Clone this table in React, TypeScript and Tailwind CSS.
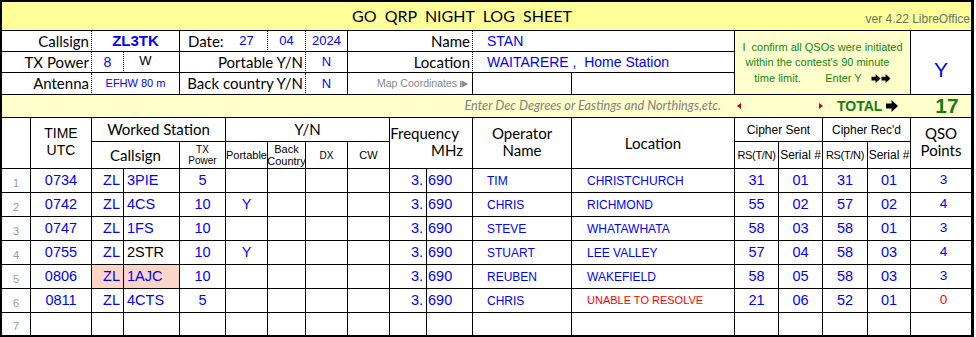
import React from "react";

const A = "font-['Liberation_Sans',Arial,sans-serif]";
const N = "font-['Liberation_Sans_Narrow','Liberation_Sans',Arial,sans-serif]";
const L = "font-['Lato',sans-serif]";
const COLS =
  "grid grid-cols-[29px_61px_32px_56px_46px_42px_38px_42px_42px_37px_46px_99px_163px_44px_44px_45px_43px_60px]";

function Arrow({ w = 12, h = 12 }: { w?: number; h?: number }) {
  return (
    <svg width={w} height={h} viewBox="0 0 12 12" className="shrink-0">
      <polygon points="0,3.5 5.5,3.5 5.5,0 12,6 5.5,12 5.5,8.5 0,8.5" fill="#000" />
    </svg>
  );
}

type Row = {
  n: number;
  time: string;
  zl: string;
  call: string;
  pwr: string;
  port: string;
  freqA: string;
  freqB: string;
  op: string;
  loc: string;
  rs1: string;
  s1: string;
  rs2: string;
  s2: string;
  pts: string;
  callBlack?: boolean;
  pink?: boolean;
  locRed?: boolean;
  ptsRed?: boolean;
};

const rows: Row[] = [
  { n: 1, time: "0734", zl: "ZL", call: "3PIE", pwr: "5", port: "", freqA: "3.", freqB: "690", op: "TIM", loc: "CHRISTCHURCH", rs1: "31", s1: "01", rs2: "31", s2: "01", pts: "3" },
  { n: 2, time: "0742", zl: "ZL", call: "4CS", pwr: "10", port: "Y", freqA: "3.", freqB: "690", op: "CHRIS", loc: "RICHMOND", rs1: "55", s1: "02", rs2: "57", s2: "02", pts: "4" },
  { n: 3, time: "0747", zl: "ZL", call: "1FS", pwr: "10", port: "", freqA: "3.", freqB: "690", op: "STEVE", loc: "WHATAWHATA", rs1: "58", s1: "03", rs2: "58", s2: "01", pts: "3" },
  { n: 4, time: "0755", zl: "ZL", call: "2STR", pwr: "10", port: "Y", freqA: "3.", freqB: "690", op: "STUART", loc: "LEE VALLEY", rs1: "57", s1: "04", rs2: "58", s2: "03", pts: "4", callBlack: true },
  { n: 5, time: "0806", zl: "ZL", call: "1AJC", pwr: "10", port: "", freqA: "3.", freqB: "690", op: "REUBEN", loc: "WAKEFIELD", rs1: "58", s1: "05", rs2: "58", s2: "03", pts: "3", pink: true },
  { n: 6, time: "0811", zl: "ZL", call: "4CTS", pwr: "5", port: "", freqA: "3.", freqB: "690", op: "CHRIS", loc: "UNABLE TO RESOLVE", rs1: "21", s1: "06", rs2: "52", s2: "01", pts: "0", locRed: true, ptsRed: true },
  { n: 7, time: "", zl: "", call: "", pwr: "", port: "", freqA: "", freqB: "", op: "", loc: "", rs1: "", s1: "", rs2: "", s2: "", pts: "" },
];

const C = "border-r border-b border-black flex items-center";
const CD = "border-r border-b border-black [border-right-style:dotted] flex items-center";
const CL = "border-b border-black flex items-center";

export default function App() {
  return (
    <div className="w-[976px] h-[337px] bg-white text-black">
      <div className="w-[974px] border-l-2 border-t-2 border-r-[3px] border-b border-black">
        {/* Top section */}
        <div className={`${COLS} grid-rows-[29px_21px_21px_22px_23px]`}>
          {/* title */}
          <div className={`col-start-1 col-span-18 row-start-1 bg-[#ffff99] ${CL}`}>
            <span className={`${L} pl-[350px] text-[16px] whitespace-pre leading-none`}>GO  QRP  NIGHT  LOG  SHEET</span>
            <span className={`${N} ml-auto pr-[1px] pt-[5px] text-[12px] text-[#667766] leading-none`}>ver 4.22 LibreOffice</span>
          </div>

          {/* row: callsign */}
          <div className={`col-start-1 col-span-2 row-start-2 ${CD} justify-end pr-[2px] ${L} text-[15px]`}>Callsign</div>
          <div className={`col-start-3 col-span-2 row-start-2 ${C} justify-center ${A} font-bold text-[15px] text-[#0000ff]`}>ZL3TK</div>
          <div className={`col-start-5 row-start-2 ${CL} pl-[8px] ${L} text-[15px]`}>Date:</div>
          <div className={`col-start-6 row-start-2 ${CD} justify-center ${A} text-[13px] text-[#0000ff]`}>27</div>
          <div className={`col-start-7 row-start-2 ${CD} justify-center ${A} text-[13px] text-[#0000ff]`}>04</div>
          <div className={`col-start-8 row-start-2 ${C} justify-center ${A} text-[13px] text-[#0000ff]`}>2024</div>
          <div className={`col-start-9 col-span-3 row-start-2 ${CD} justify-end pr-[2px] ${L} text-[15px]`}>Name</div>
          <div className={`col-start-12 col-span-2 row-start-2 ${C} pl-[14px] ${A} text-[14px] text-[#0000ff]`}>STAN</div>
          <div className={`col-start-14 col-span-4 row-start-2 row-span-3 bg-[#ffffcc] border-r border-b border-black flex flex-col items-center justify-center ${N} text-[11px] leading-[15.5px] text-[#118811] pt-[1px]`}>
            <span className="whitespace-pre">I  confirm all QSOs were initiated</span>
            <span className="whitespace-pre pr-[10px]">within the contest's 90 minute</span>
            <span className="whitespace-pre flex items-center">
              time limit.        Enter Y   <Arrow w={10} h={9} />
              <Arrow w={10} h={9} />
            </span>
          </div>
          <div className={`col-start-18 row-start-2 row-span-3 ${CL} justify-center pt-[15px] ${A} text-[21px] text-[#0000ff]`}>Y</div>

          {/* row: tx power */}
          <div className={`col-start-1 col-span-2 row-start-3 ${CD} justify-end pr-[2px] ${L} text-[15px]`}>TX Power</div>
          <div className={`col-start-3 row-start-3 ${CD} justify-center ${A} text-[14px] text-[#0000ff]`}>8</div>
          <div className={`col-start-4 row-start-3 ${C} justify-center pr-[12px] pb-[3px] ${A} text-[13px]`}>W</div>
          <div className={`col-start-5 col-span-3 row-start-3 ${CD} justify-end pr-[2px] ${L} text-[15px]`}>Portable Y/N</div>
          <div className={`col-start-8 row-start-3 ${C} justify-center ${A} text-[13px] text-[#0000ff]`}>N</div>
          <div className={`col-start-9 col-span-3 row-start-3 ${CD} justify-end pr-[2px] ${L} text-[15px]`}>Location</div>
          <div className={`col-start-12 col-span-2 row-start-3 ${C} pl-[14px] ${A} text-[14px] text-[#0000ff] whitespace-pre`}>WAITARERE ,  Home Station</div>

          {/* row: antenna */}
          <div className={`col-start-1 col-span-2 row-start-4 ${CD} justify-end pr-[2px] ${L} text-[15px]`}>Antenna</div>
          <div className={`col-start-3 col-span-2 row-start-4 ${C} justify-center ${A} text-[11px] text-[#0000ff] whitespace-pre`}>EFHW 80 m</div>
          <div className={`col-start-5 col-span-3 row-start-4 ${CD} justify-end pr-[2px] ${L} text-[15px]`}>Back country Y/N</div>
          <div className={`col-start-8 row-start-4 ${C} justify-center ${A} text-[13px] text-[#0000ff]`}>N</div>
          <div className={`col-start-9 col-span-3 row-start-4 ${C} justify-end pr-[4px] ${N} text-[10.5px] text-[#888888]`}>
            Map Coordinates
            <svg width="8" height="8" viewBox="0 0 8 8" className="ml-[3px]">
              <rect x="0" y="1" width="1.5" height="6" fill="#888888" />
              <polygon points="2,0.5 8,4 2,7.5" fill="#888888" />
            </svg>
          </div>
          <div className={`col-start-12 row-start-4 ${C}`}></div>
          <div className={`col-start-13 row-start-4 ${C}`}></div>

          {/* yellow row */}
          <div className={`col-start-1 col-span-13 row-start-5 bg-[#ffffcc] ${CL} justify-end pr-[14px] ${L} italic text-[12.7px] text-[#808080]`}>
            Enter Dec Degrees or Eastings and Northings,etc.
          </div>
          <div className={`col-start-14 col-span-4 row-start-5 bg-[#ffffcc] ${CL}`}>
            <svg width="4" height="6" viewBox="0 0 4 6" className="ml-[2px]">
              <polygon points="4,0 0,3 4,6" fill="#cc0000" />
            </svg>
            <svg width="4" height="6" viewBox="0 0 4 6" className="ml-[78px]">
              <polygon points="0,0 4,3 0,6" fill="#cc0000" />
            </svg>
            <span className={`${A} font-bold text-[14px] text-[#167c16] ml-[14px]`}>TOTAL</span>
            <span className="ml-[4px]">
              <Arrow w={12} h={12} />
            </span>
          </div>
          <div className={`col-start-18 row-start-5 bg-[#ffffcc] ${CL} justify-center pl-[12px] ${A} font-bold text-[21px] text-[#167c16]`}>17</div>
        </div>

        {/* Table */}
        <div className={`${COLS} grid-rows-[24px_27px_24px_24px_24px_24px_24px_24px_23px]`}>
          <div className={`col-start-1 row-start-1 row-span-2 ${C}`}></div>
          <div className={`col-start-2 row-start-1 row-span-2 border-r border-b border-black flex flex-col items-center justify-center ${A} text-[14px] leading-[17px] pb-[2px]`}>
            <span>TIME</span>
            <span>UTC</span>
          </div>
          <div className={`col-start-3 col-span-3 row-start-1 ${C} justify-center ${L} text-[15px]`}>Worked Station</div>
          <div className={`col-start-6 col-span-4 row-start-1 ${C} justify-center ${L} text-[15px]`}>Y/N</div>
          <div className={`col-start-10 col-span-2 row-start-1 row-span-2 border-r border-b border-black flex flex-col items-end justify-center pr-[9px] ${L} text-[15px] leading-[17px] pb-[2px]`}>
            <span className="pr-[4px]">Frequency</span>
            <span>MHz</span>
          </div>
          <div className={`col-start-12 row-start-1 row-span-2 border-r border-b border-black flex flex-col items-center justify-center ${L} text-[15px] leading-[17px] pb-[2px]`}>
            <span>Operator</span>
            <span>Name</span>
          </div>
          <div className={`col-start-13 row-start-1 row-span-2 ${C} justify-center ${L} text-[15px]`}>Location</div>
          <div className={`col-start-14 col-span-2 row-start-1 ${C} justify-center ${N} text-[12px]`}>Cipher Sent</div>
          <div className={`col-start-16 col-span-2 row-start-1 ${C} justify-center ${N} text-[12px]`}>Cipher Rec'd</div>
          <div className={`col-start-18 row-start-1 row-span-2 border-b border-black flex flex-col items-center justify-center ${L} text-[15px] leading-[17px] pb-[2px]`}>
            <span>QSO</span>
            <span>Points</span>
          </div>

          <div className={`col-start-3 col-span-2 row-start-2 ${C} justify-center ${L} text-[15px]`}>Callsign</div>
          <div className={`col-start-5 row-start-2 border-r border-b border-black flex flex-col items-center justify-center ${N} text-[10px] leading-[11px]`}>
            <span>TX</span>
            <span>Power</span>
          </div>
          <div className={`col-start-6 row-start-2 ${C} justify-center ${N} text-[11px]`}>Portable</div>
          <div className={`col-start-7 row-start-2 border-r border-b border-black flex flex-col items-center justify-center ${N} text-[11px] leading-[12px]`}>
            <span>Back</span>
            <span>Country</span>
          </div>
          <div className={`col-start-8 row-start-2 ${C} justify-center ${N} text-[10px]`}>DX</div>
          <div className={`col-start-9 row-start-2 ${C} justify-center ${N} text-[11px]`}>CW</div>
          <div className={`col-start-14 row-start-2 ${C} justify-center ${N} text-[11px] tracking-[-0.3px]`}>RS(T/N)</div>
          <div className={`col-start-15 row-start-2 ${C} justify-center ${N} text-[12px]`}>Serial #</div>
          <div className={`col-start-16 row-start-2 ${C} justify-center ${N} text-[11px] tracking-[-0.3px]`}>RS(T/N)</div>
          <div className={`col-start-17 row-start-2 ${C} justify-center ${N} text-[12px]`}>Serial #</div>

          {rows.map((r) => (
            <React.Fragment key={r.n}>
              <div className={`${C} items-end justify-center pb-[1px] ${A} text-[11px] text-[#999999]`}>{r.n}</div>
              <div className={`${C} justify-center ${A} text-[14.5px] text-[#0000ff]`}>{r.time}</div>
              <div className={`${C} justify-end pr-[3px] ${A} text-[14.5px] text-[#0000ff] ${r.pink ? "bg-[#fcd5c9]" : ""}`}>{r.zl}</div>
              <div className={`${C} pl-[3px] ${A} text-[14.5px] ${r.callBlack ? "text-black" : "text-[#0000ff]"} ${r.pink ? "bg-[#fcd5c9]" : ""}`}>{r.call}</div>
              <div className={`${C} justify-center ${A} text-[14.5px] text-[#0000ff]`}>{r.pwr}</div>
              <div className={`${C} justify-center ${A} text-[14.5px] text-[#0000ff]`}>{r.port}</div>
              <div className={`${C}`}></div>
              <div className={`${C}`}></div>
              <div className={`${C}`}></div>
              <div className={`${C} justify-end pr-[3px] ${A} text-[14.5px] text-[#0000ff]`}>{r.freqA}</div>
              <div className={`${C} pl-[1px] ${A} text-[14.5px] text-[#0000ff]`}>{r.freqB}</div>
              <div className={`${C} pl-[14px] ${N} text-[12px] text-[#0000ff]`}>{r.op}</div>
              <div className={`${C} pl-[15px] ${N} ${r.locRed ? "text-[11px] text-[#ff0000]" : "text-[12px] text-[#0000ff]"}`}>{r.loc}</div>
              <div className={`${C} justify-center ${A} text-[14.5px] text-[#0000ff]`}>{r.rs1}</div>
              <div className={`${C} justify-center ${A} text-[14.5px] text-[#0000ff]`}>{r.s1}</div>
              <div className={`${C} justify-center ${A} text-[14.5px] text-[#0000ff]`}>{r.rs2}</div>
              <div className={`${C} justify-center ${A} text-[14.5px] text-[#0000ff]`}>{r.s2}</div>
              <div className={`${CL} justify-center pl-[5px] ${A} text-[13.5px] ${r.ptsRed ? "text-[#ff0000]" : "text-[#0000ff]"}`}>{r.pts}</div>
            </React.Fragment>
          ))}
        </div>
      </div>
    </div>
  );
}
